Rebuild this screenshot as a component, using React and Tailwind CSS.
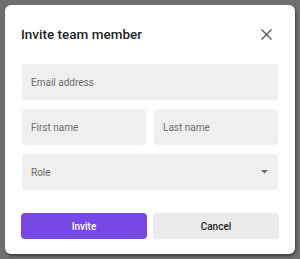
export default function App() {
  return (
    <div className="w-[300px] h-[259px] bg-[#707070] p-[5px] overflow-hidden" style={{ fontFamily: "Roboto, 'Noto Sans', sans-serif" }}>
      <div className="w-[290px] h-[249px] bg-white rounded-[6px] shadow-[1px_2px_3px_rgba(0,0,0,0.45)] px-[17px] pt-[18px] flex flex-col">
        <div className="flex items-center justify-between h-[22px]">
          <h1 className="text-[13.5px] font-medium text-[#1f1f1f] leading-[22px] -ml-[1px]">Invite team member</h1>
          <button className="w-[12px] h-[12px] flex items-center justify-center mr-[6px]" aria-label="Close">
            <svg width="11" height="11" viewBox="0 0 11 11" fill="none" stroke="#555" strokeWidth="1.3" strokeLinecap="square">
              <path d="M1 1 L10 10 M10 1 L1 10" />
            </svg>
          </button>
        </div>
        <div className="mt-[19px] flex flex-col gap-[9px]">
          <div className="h-[36px] bg-[#efefef] rounded-[4px] flex items-center px-[9px] text-[10px] text-[#6b6b6b]">Email address</div>
          <div className="grid grid-cols-2 gap-[8px]">
            <div className="h-[36px] bg-[#efefef] rounded-[4px] flex items-center px-[9px] text-[10px] text-[#6b6b6b]">First name</div>
            <div className="h-[36px] bg-[#efefef] rounded-[4px] flex items-center px-[9px] text-[10px] text-[#6b6b6b]">Last name</div>
          </div>
          <div className="h-[36px] bg-[#efefef] rounded-[4px] flex items-center justify-between pl-[9px] pr-[10px] text-[10px] text-[#6b6b6b]">
            <span>Role</span>
            <svg width="7" height="4" viewBox="0 0 7 4"><path d="M0 0 L7 0 L3.5 3.5 Z" fill="#666" /></svg>
          </div>
        </div>
        <div className="mt-[23px] grid grid-cols-2 gap-[6px] -mx-[1px]">
          <button className="h-[26px] rounded-[4px] bg-[#7749e4] text-white text-[10px] font-medium">Invite</button>
          <button className="h-[26px] rounded-[4px] bg-[#ebebeb] text-[#1f1f1f] text-[10px] font-medium">Cancel</button>
        </div>
      </div>
    </div>
  );
}
